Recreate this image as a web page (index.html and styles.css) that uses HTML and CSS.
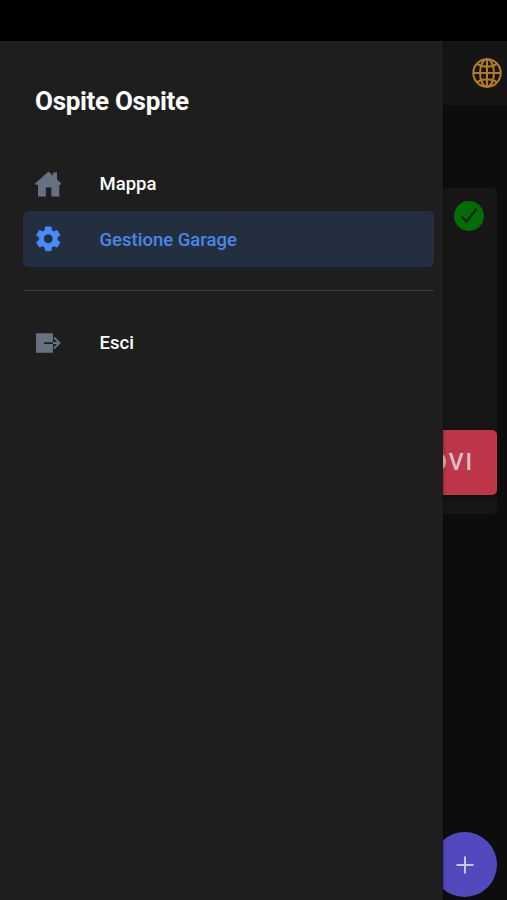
FILE: index.html
```html
<!DOCTYPE html>
<html lang="it">
<head>
    <meta charset="UTF-8">
    <meta name="viewport" content="width=device-width, initial-scale=1.0">
    <title>Gestione Garage</title>
    <link rel="stylesheet" href="styles.css">
</head>
<body>
    <div class="status-bar"></div>
    <div class="app">
        <!-- Pagina sotto il menu -->
        <div class="page">
            <header class="toolbar">
                <svg class="globe" viewBox="0 0 30 30" fill="none" stroke="currentColor" stroke-width="2">
                    <circle cx="15" cy="15" r="13.7"/>
                    <ellipse cx="15" cy="15" rx="7" ry="13.7"/>
                    <path d="M15 1.3v27.4M1.3 15h27.4M5 5.8c5.5 4 14.5 4 20 0M5 24.2c5.5-4 14.5-4 20 0"/>
                </svg>
            </header>
            <main class="content">
                <div class="card">
                    <svg class="check" viewBox="0 0 30 30">
                        <circle cx="15" cy="15" r="15" fill="#046c06"/>
                        <path d="M7.5 15.5l5 5L22.8 7.8" fill="none" stroke="#0d260d" stroke-width="2.2"/>
                    </svg>
                    <button type="button" class="remove">RIMUOVI</button>
                </div>
            </main>
            <button type="button" class="fab">
                <svg viewBox="0 0 18 18" fill="none" stroke="currentColor" stroke-width="2">
                    <path d="M9 .5v17M.5 9h17"/>
                </svg>
            </button>
        </div>

        <!-- Menu laterale -->
        <nav class="menu">
            <h1>Ospite Ospite</h1>
            <a class="item">
                <svg viewBox="0 0 28 28" fill="currentColor">
                    <path d="M14.5 1.5L19 5.7V2.5h4v7L27.5 13.7l-1 1H25.3V26.5h-8V17.5h-5.5v9H4V14.7H1.8l-1-1z"/>
                </svg>
                <span>Mappa</span>
            </a>
            <a class="item selected">
                <svg viewBox="0.6 1 22.4 22.4" fill="currentColor" stroke="currentColor" stroke-width="0.5">
                    <path d="M19.14 12.94c.04-.3.06-.61.06-.94 0-.32-.02-.64-.07-.94l2.03-1.58c.18-.14.23-.41.12-.61l-1.92-3.32c-.12-.22-.37-.29-.59-.22l-2.39.96c-.5-.38-1.03-.7-1.62-.94l-.36-2.54c-.04-.24-.24-.41-.48-.41h-3.84c-.24 0-.43.17-.47.41l-.36 2.54c-.59.24-1.13.57-1.62.94l-2.39-.96c-.22-.08-.47 0-.59.22L2.74 8.87c-.12.21-.08.47.12.61l2.03 1.58c-.05.3-.09.63-.09.94s.02.64.07.94l-2.03 1.58c-.18.14-.23.41-.12.61l1.92 3.32c.12.22.37.29.59.22l2.39-.96c.5.38 1.03.7 1.62.94l.36 2.54c.05.24.24.41.48.41h3.84c.24 0 .44-.17.47-.41l.36-2.54c.59-.24 1.13-.56 1.62-.94l2.39.96c.22.08.47 0 .59-.22l1.92-3.32c.12-.22.07-.47-.12-.61l-2.01-1.58zM12 15.8A3.8 3.8 0 1 1 12 8.2a3.8 3.8 0 0 1 0 7.6z"/>
                </svg>
                <span>Gestione Garage</span>
            </a>
            <hr>
            <a class="item">
                <svg viewBox="0 0 28 28" fill="none">
                    <path d="M2 4.2h17v9H10v1.7h9v8.9H2z" fill="currentColor"/>
                    <path d="M19 14h6.5M20 8.5l5.5 5.5-5.5 5.5" stroke="currentColor" stroke-width="1.9"/>
                </svg>
                <span>Esci</span>
            </a>
        </nav>
    </div>
</body>
</html>
```

FILE: styles.css
```css
* {
    box-sizing: border-box;
}

body {
    margin: 0;
    height: 900px;
    overflow: hidden;
    background: #000;
    color: #fff;
    font-family: Roboto, sans-serif;
}

.status-bar {
    height: 41px;
    background: #000;
}

.app {
    position: relative;
    height: 859px;
    overflow: hidden;
}

.page {
    height: 100%;
    background: #0d0d0d;
}

.toolbar {
    display: flex;
    align-items: center;
    justify-content: flex-end;
    height: 64px;
    padding-right: 5px;
    background: #151515;
}

.globe {
    width: 30px;
    height: 30px;
    color: #b67b1e;
}

.content {
    padding: 83px 10px 0;
}

.card {
    display: flex;
    flex-direction: column;
    align-items: flex-end;
    justify-content: space-between;
    height: 326px;
    padding: 13px 0 19px;
    border-radius: 5px;
    background: #161616;
}

.check {
    width: 30px;
    height: 30px;
    margin-right: 13px;
}

.remove {
    width: 157px;
    height: 65px;
    padding: 0 23px 0 0;
    border: none;
    border-radius: 5px;
    background: #bd364a;
    box-shadow: 0 1px 4px rgba(0, 0, 0, 0.6);
    color: #d9c0c5;
    font: 500 23px Roboto, sans-serif;
    letter-spacing: 2px;
    text-align: right;
}

.fab {
    position: absolute;
    right: 10px;
    bottom: 3px;
    display: flex;
    align-items: center;
    justify-content: center;
    width: 65px;
    height: 65px;
    padding: 0;
    border: none;
    border-radius: 50%;
    background: #5149bd;
    color: #c8c5e8;
}

.fab svg {
    width: 18px;
    height: 18px;
}

.menu {
    position: absolute;
    top: 0;
    left: 0;
    width: 443px;
    height: 100%;
    padding: 43px 9px 0 23px;
    background: #1e1e1e;
    box-shadow: 0 0 4px rgba(0, 0, 0, 0.4);
}

.menu h1 {
    height: 33px;
    margin: 0 0 39px;
    padding-left: 12px;
    font-size: 26px;
    font-weight: 700;
    line-height: 34px;
    letter-spacing: -0.3px;
}

.item {
    display: flex;
    align-items: center;
    gap: 37.5px;
    height: 55px;
    padding-left: 11px;
    border-radius: 5px;
    font-size: 18.5px;
    font-weight: 500;
    line-height: 23px;
}

.item span {
    padding-top: 2px;
}

.item svg {
    width: 28px;
    height: 28px;
    color: #667282;
}

.item.selected {
    height: 56px;
    background: #232f3f;
    color: #4a86e8;
}

.item.selected svg {
    color: #488aff;
}

.menu hr {
    height: 1px;
    margin: 23px 0 24px;
    border: none;
    background: #383838;
}
```
